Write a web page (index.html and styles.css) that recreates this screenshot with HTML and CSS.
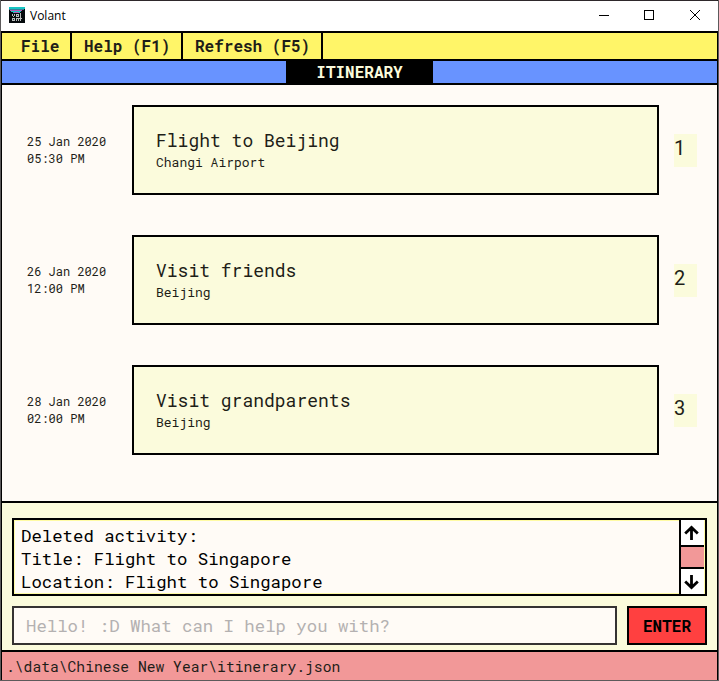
FILE: index.html
```html
<!DOCTYPE html>
<html lang="en">
<head>
<meta charset="utf-8">
<title>Volant</title>
<link rel="stylesheet" href="styles.css">
</head>
<body>
<div class="window">
  <header class="titlebar">
    <svg class="logo" width="16" height="16" viewBox="0 0 16 16" shape-rendering="crispEdges">
      <path fill="#050a0d" d="M0 0h16v16H0z"/>
      <path fill="#16c5c3" d="M0 0h16v2H0zM2 4h10v1H2zM4 5h7v1H4z"/>
      <path fill="#397d99" d="M0 2h15v1H0z"/>
      <path fill="#b45ab3" d="M1 3h12v1H1zM5 5h5v1H5z"/>
      <path fill="#b9bdbc" d="M3 7h1v2H3zM5 7h1v2H5zM4 9h1v1H4zM7 7h3v3H7zM11 6h1v4h-1zM3 11h3v3H3zM7 11h1v3H7zM8 11h2v1H8zM9 12h1v2H9zM11 10h1v4h-1zM10 11h3v1h-3z"/>
      <path fill="#182024" d="M8 8h1v1H8zM4 12h1v1H4z"/>
    </svg>
    <span class="app-name">Volant</span>
    <svg class="controls" width="103" height="12" viewBox="0 0 103 12" fill="none" stroke="#000">
      <path d="M0 6.500h10M45.500 1.500h9v9h-9z" shape-rendering="crispEdges"/>
      <path d="M91 1l10 10M101 1l-10 10"/>
    </svg>
  </header>
  <nav class="menu">
    <span class="menu-item first">File</span>
    <span class="menu-item help">Help (F1)</span>
    <span class="menu-item refresh">Refresh (F5)</span>
  </nav>
  <div class="tabs"><span class="tab">ITINERARY</span></div>
  <main class="list">
    <div class="row">
      <div class="when">25 Jan 2020<br>05:30 PM</div>
      <div class="card"><div class="name">Flight to Beijing</div><div class="place">Changi Airport</div></div>
      <div class="index">1</div>
    </div>
    <div class="row">
      <div class="when">26 Jan 2020<br>12:00 PM</div>
      <div class="card"><div class="name">Visit friends</div><div class="place">Beijing</div></div>
      <div class="index">2</div>
    </div>
    <div class="row">
      <div class="when">28 Jan 2020<br>02:00 PM</div>
      <div class="card"><div class="name">Visit grandparents</div><div class="place">Beijing</div></div>
      <div class="index">3</div>
    </div>
  </main>
  <section class="console">
    <div class="output">
      <div class="message">Deleted activity:<br>Title: Flight to Singapore<br>Location: Flight to Singapore</div>
      <div class="scroll">
        <div class="arrow"><svg width="15" height="16" viewBox="0 0 15 16"><path d="M7.500 15V2.500M1.200 8.500l6.300-6 6.300 6"/></svg></div>
        <div class="thumb"></div>
        <div class="arrow"><svg width="15" height="16" viewBox="0 0 15 16"><path d="M7.500 1v12.500M1.200 7.500l6.300 6 6.300-6"/></svg></div>
      </div>
    </div>
    <div class="command">
      <div class="input">Hello! :D What can I help you with?</div>
      <div class="enter">ENTER</div>
    </div>
  </section>
  <footer class="status">.\data\Chinese New Year\itinerary.json</footer>
</div>
</body>
</html>
```
FILE: styles.css
```css
* { box-sizing: border-box; }
body {
  margin: 0;
  background: #5c5a5b;
  font-family: "Roboto Mono", "DejaVu Sans Mono", monospace;
  color: #1e1e18;
  white-space: nowrap;
}
.window {
  width: 717px;
  height: 680px;
  margin-left: 1px;
  border-top: 1px solid #2e282b;
  border-left: 1px solid #000;
  border-right: 1px solid #000;
  display: flex;
  flex-direction: column;
}
.titlebar {
  height: 30px;
  margin: 0 -1px;
  background: #fff;
  display: flex;
  align-items: center;
  padding: 0 16px 0 8px;
}
.logo { margin-bottom: 2px; }
.app-name { margin-left: 5px; font: 12px/16px "Open Sans", sans-serif; color: #000; }
.controls { margin-left: auto; margin-bottom: 2px; }
.menu {
  height: 30px;
  border-top: 2px solid #000;
  border-bottom: 2px solid #000;
  background: #fff568;
  display: flex;
  font-weight: bold;
  font-size: 16px;
  line-height: 26px;
}
.menu-item { border-right: 2px solid #000; padding-left: 12px; }
.first { width: 70px; padding-left: 19px; }
.help { width: 111px; }
.refresh { width: 140px; }
.tabs {
  height: 24px;
  border-bottom: 2px solid #000;
  background: #6893ff;
  display: flex;
  padding-left: 284px;
}
.tab {
  width: 147px;
  background: #000;
  color: #fbfbdc;
  text-align: center;
  font-weight: bold;
  font-size: 16px;
  line-height: 21px;
}
.list {
  height: 416px;
  background: #fffbf6;
  padding: 20px 20px 0 25px;
  display: flex;
  flex-direction: column;
  gap: 40px;
}
.row {
  height: 90px;
  display: grid;
  grid-template-columns: 105px 527px 38px;
  align-items: center;
}
.when { font-size: 12px; line-height: 17px; }
.card {
  height: 90px;
  border: 2px solid #000;
  background: #fbfbdc;
  padding: 21px 22px 0;
}
.name { font-size: 18px; line-height: 24px; }
.place { margin-top: 1px; font-size: 13px; line-height: 19px; }
.index {
  width: 23px;
  height: 33px;
  margin-left: 15px;
  background: #fbfbdc;
  font: 20px/29px Roboto, sans-serif;
}
.console {
  height: 151px;
  border-top: 2px solid #000;
  border-bottom: 2px solid #000;
  background: #fbfbdc;
  padding: 15px 10px 0;
}
.output {
  height: 78px;
  border: 2px solid #000;
  background: #fffbf6;
  box-shadow: inset 0 0 0 1px #fffba4;
  display: flex;
}
.message {
  flex: 1;
  padding: 4px 0 0 7px;
  color: #000;
  font-size: 17.330px;
  line-height: 23px;
}
.scroll {
  width: 25px;
  margin-right: 1px;
  border-left: 2px solid #000;
  display: flex;
  flex-direction: column;
}
.arrow { height: 25px; background: #fff; display: flex; justify-content: center; align-items: center; padding-right: 2px; }
.arrow path { fill: none; stroke: #000; stroke-width: 2.800; }
.thumb { height: 24px; background: #f29898; border-top: 2px solid #000; border-bottom: 2px solid #000; }
.command { display: flex; gap: 10px; margin-top: 10px; }
.input {
  width: 605px;
  height: 39px;
  border: 2px solid #353232;
  background: #fffbf6;
  color: #b4b1b1;
  padding-left: 12px;
  font-size: 17.330px;
  line-height: 36px;
}
.enter {
  width: 80px;
  height: 39px;
  border: 2px solid #000;
  background: #ff4040;
  color: #000;
  text-align: center;
  font-weight: bold;
  font-size: 16px;
  line-height: 36px;
}
.status {
  height: 28px;
  background: #f29898;
  padding-left: 4px;
  font-size: 14.670px;
  line-height: 29px;
}
```
